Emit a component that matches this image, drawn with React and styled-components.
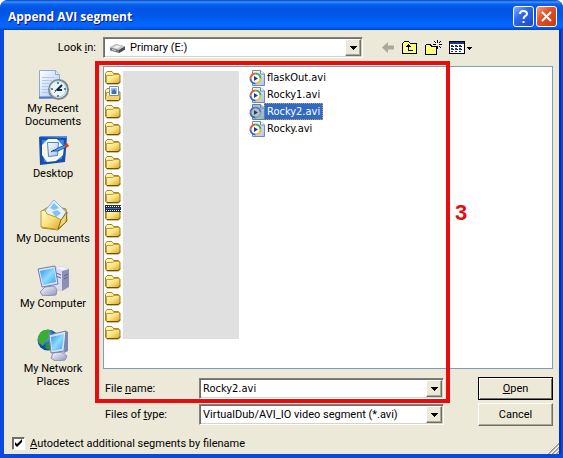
import { useState } from "react";
import styled, { createGlobalStyle, css } from "styled-components";

const GlobalStyle = createGlobalStyle`
  * {
    box-sizing: border-box;
  }
  body {
    margin: 0;
    background: #fff;
    color: #000;
    font-family: Roboto, Tahoma, sans-serif;
    font-size: 11px;
    line-height: 13px;
  }
  button, input, select {
    font: inherit;
    color: inherit;
  }
`;

const raised = css`
  border: 1px solid;
  border-color: #fff #716f64 #716f64 #fff;
  box-shadow: inset -1px -1px #aca899;
`;

const Dialog = styled.main`
  border-radius: 8px 8px 0 0;
  overflow: hidden;
  background: #0a48de;
`;

const TitleBar = styled.header`
  display: flex;
  align-items: center;
  gap: 2px;
  height: 30px;
  padding: 3px 6px 0 8px;
  background: linear-gradient(
    #0a3fc4 0,
    #3a93ff 2px,
    #0a62ee 4px,
    #0054e3 9px,
    #0058ea 16px,
    #0366ff 24px,
    #0364fb 27px,
    #0042c4 30px
  );
`;

const Title = styled.h1`
  flex: 1;
  margin: 0;
  color: #fff;
  font: bold 12px "Open Sans", "Noto Sans", sans-serif;
  text-shadow: 1px 1px #0f1089;
`;

const CaptionButton = styled.button`
  width: 21px;
  height: 21px;
  padding: 0;
  border: 1px solid #fff;
  border-radius: 3px;
  background: ${(p) =>
    p.$close
      ? "linear-gradient(135deg, #f0a084, #e0522c 40%, #c83a12)"
      : "linear-gradient(135deg, #88aef8, #2f67e8 40%, #1a48cc)"};

  svg {
    display: block;
  }
`;

const Body = styled.div`
  margin: 0 4px 4px;
  padding: 7px 6px 4px;
  background: #ece9d8;
  box-shadow: 2px 0 #0030c0;
  position: relative;
`;

const LookInRow = styled.div`
  display: flex;
  align-items: center;
`;

const LookInLabel = styled.label`
  width: 93px;
  padding-right: 7px;
  text-align: right;
`;

const Combo = styled.div`
  position: relative;
  flex: 1;
  display: flex;
  align-items: center;
  height: 21px;
  min-width: 0;
  padding: 1px 18px 1px 1px;
  background: #fff;
  border: 1px solid;
  border-color: #808080 #fff #fff #808080;
  box-shadow: inset 1px 1px #716f64, inset -1px -1px #d8d4c4;

  svg.drive {
    flex: none;
    margin: 0 2px 0 4px;
  }
  select, input {
    flex: 1;
    min-width: 0;
    height: 17px;
    padding: 0 2px;
    border: 0;
    background: none;
    outline: 0;
    appearance: none;
  }
  input {
    font-family: "DejaVu Sans Condensed", Verdana, sans-serif;
  }
`;

const Arrow = styled.span`
  ${raised}
  position: absolute;
  top: 1px;
  right: 1px;
  bottom: 1px;
  width: 16px;
  display: grid;
  place-items: center;
  background: #ece9d8;
  pointer-events: none;
`;

const Tools = styled.div`
  flex: none;
  display: flex;
  gap: 7px;
  width: 190px;
  padding-left: 18px;
`;

const ToolButton = styled.button`
  flex: none;
  padding: 0;
  border: 0;
  background: none;

  svg {
    display: block;
  }
`;

const Columns = styled.div`
  display: flex;
  margin-top: 8px;
`;

const Places = styled.nav`
  flex: none;
  display: flex;
  flex-direction: column;
  width: 86px;
  margin-right: 7px;
  padding-top: 3px;
`;

const Place = styled.button`
  display: flex;
  flex-direction: column;
  align-items: center;
  min-height: 65px;
  padding: 0;
  border: 0;
  background: none;

  svg {
    flex: none;
    margin-bottom: 1px;
  }
  span {
    max-width: 80px;
  }
`;

const Main = styled.div`
  position: relative;
  flex: 1;
  min-width: 0;
`;

const Files = styled.div`
  display: flex;
  padding: 2px 1px 27px;
  background: #fff;
  border: 1px solid #7f9db9;
`;

const FolderIcons = styled.ul`
  margin: 0 2px 0 0;
  padding: 0;
  list-style: none;

  li {
    height: 17px;
  }
  svg {
    display: block;
  }
`;

const HiddenNames = styled.div`
  width: 116px;
  margin: 2px 10px 2px 0;
  background: #e0e0e0;
`;

const FileList = styled.ul`
  margin: 0;
  padding: 0;
  list-style: none;
`;

const FileItem = styled.li`
  display: flex;
  align-items: center;
  height: 17px;

  span {
    padding: 1px 2px;
    border: 1px dotted transparent;
    margin-left: -1px;
    font-family: "DejaVu Sans Condensed", Verdana, sans-serif;
    line-height: 13px;
  }
  ${(p) =>
    p.$selected &&
    css`
      span {
        color: #fff;
        background: #316ac5;
        border-color: #d89a4a;
      }
      svg {
        filter: sepia(1) hue-rotate(180deg) saturate(3) brightness(0.75);
      }
    `}
`;

const Fields = styled.div`
  display: grid;
  grid-template-columns: 94px 1fr 75px;
  row-gap: 3px;
  align-items: center;
  margin-top: 8px;
  padding-left: 2px;

  ${Combo} {
    margin-right: 34px;
  }
`;

const PushButton = styled.button`
  ${raised}
  height: 23px;
  padding: 0;
  background: #ece9d8;
  ${(p) =>
    p.$default &&
    css`
      border-color: #000;
      box-shadow: inset 1px 1px #fff, inset -1px -1px #716f64;
    `}
`;

const Highlight = styled.div`
  position: absolute;
  top: -5px;
  right: 103px;
  bottom: 23px;
  left: -8px;
  border: 4px solid #e80c0c;
  pointer-events: none;
`;

const StepNumber = styled.strong`
  position: absolute;
  top: 50%;
  left: 100%;
  margin: -32px 0 0 9px;
  color: #e80c0c;
  font: bold 22px "Liberation Sans", Arial, sans-serif;
`;

const Autodetect = styled.label`
  display: flex;
  align-items: center;
  gap: 5px;
  margin-top: 11px;
  padding-left: 2px;
`;

const CheckBox = styled.input`
  appearance: none;
  width: 13px;
  height: 13px;
  margin: 0;
  border: 1px solid;
  border-color: #716f64 #fff #fff #716f64;
  background: #fff;
  box-shadow: inset 1px 1px #716f64;

  &:checked {
    background: #fff
      url("data:image/svg+xml,%3Csvg xmlns='http://www.w3.org/2000/svg' viewBox='0 0 11 11'%3E%3Cpath d='M2 4v3l2 2 5-5V1L4 6z'/%3E%3C/svg%3E");
  }
`;

const Grip = styled.svg`
  position: absolute;
  right: 0;
  bottom: 0;
`;

const Gradients = () => (
  <svg width="0" height="0" style={{ position: "absolute" }} aria-hidden="true">
    <defs>
      <linearGradient id="gold" x2="1" y2="1">
        <stop stopColor="#fffbd0" />
        <stop offset=".5" stopColor="#fae27c" />
        <stop offset="1" stopColor="#d9a62c" />
      </linearGradient>
      <linearGradient id="screen" x2="1" y2="1">
        <stop stopColor="#2c8cf0" />
        <stop offset=".5" stopColor="#8fdcff" />
        <stop offset="1" stopColor="#3a9cf4" />
      </linearGradient>
      <linearGradient id="metal" x2="1" y2="1">
        <stop stopColor="#fff" />
        <stop offset="1" stopColor="#8c92b8" />
      </linearGradient>
      <linearGradient id="paper" x2="1" y2="1">
        <stop stopColor="#fff" />
        <stop offset="1" stopColor="#a8c4f0" />
      </linearGradient>
      <radialGradient id="globe" cx=".35" cy=".3">
        <stop stopColor="#8cd4ff" />
        <stop offset="1" stopColor="#0848b0" />
      </radialGradient>
    </defs>
  </svg>
);

const DownArrow = () => (
  <svg width="7" height="4" shapeRendering="crispEdges">
    <path d="M0 0h7v1H6v1H5v1H4v1H3V3H2V2H1V1H0z" />
  </svg>
);

const FolderIcon = ({ kind }) => (
  <svg width="16" height="16">
    <path
      d="M.5 4.500 2 2.500h5l1.500 2h5l1.500 1.500v7.500l-1.500 1.500H2L.5 13.500z"
      fill="url(#gold)"
      stroke="#a88420"
    />
    <path d="M1.500 6.500h6l1.500-1h5.500v7.500l-1.500 1.500H1.500z" fill="url(#gold)" stroke="#c49c34" />
    <path d="M2 14.500h11.500l1.500-2" fill="none" stroke="#6c5210" />
    {kind === "pictures" && (
      <>
        <path d="M4.500.5h9v9h-9z" fill="#fff" stroke="#6c8cc4" />
        <path d="M6 2h6v6H6z" fill="#8cc0f4" />
        <path d="M7 8V5l2-2 2 2v3z" fill="#4a6cb0" />
        <path d="M1 10h13v4H1z" fill="#f4d468" />
      </>
    )}
    {kind === "video" && (
      <>
        <path d="M0 0h16v7H0z" fill="#1c2c58" />
        <path d="M1 1.500h15M1 5.500h15" stroke="#fff" strokeDasharray="1 1" />
        <path d="M1 3h14v1H1z" fill="#4468b8" />
      </>
    )}
  </svg>
);

const AviIcon = () => (
  <svg width="16" height="16">
    <path d="M3.500.5h8l4 3.500v11.500h-12z" fill="url(#paper)" stroke="#7488b8" />
    <path d="M11.500.5v3.500h4" fill="#fff" stroke="#7488b8" />
    <circle cx="6.500" cy="8.500" r="5" fill="#fff" />
    <g fill="none" strokeWidth="2">
      <path d="M1.500 8.500a5 5 0 0 1 5-5" stroke="#e45c28" />
      <path d="M6.500 3.500a5 5 0 0 1 5 5" stroke="#48a850" />
      <path d="M11.500 8.500a5 5 0 0 1-5 5" stroke="#f0b828" />
      <path d="M6.500 13.500a5 5 0 0 1-5-5" stroke="#3868d0" />
    </g>
    <path d="M5 6v5l4-2.500z" fill="#183c98" />
  </svg>
);

const DriveIcon = () => (
  <svg className="drive" width="17" height="14">
    <path d="M1 6.500 7 3l9 2.500v3L10 12 1 9.500z" fill="#77777c" />
    <path d="M1 6.500 7 3l9 2.500L10 9z" fill="#c8c8cc" />
    <path d="M4 6.500 8 4.500l4 1-4 2z" fill="#eee" />
    <path d="m10 9 6-3.500v3L10 12z" fill="#4c4c50" />
    <path d="M3 8.500 7 9.500" stroke="#ddd" />
  </svg>
);

const RecentIcon = () => (
  <svg width="32" height="32">
    <path d="M2.500 1.500h16l4 4v23l-20 1z" fill="url(#paper)" stroke="#8ca8dc" />
    <path d="M2 28.500h20" stroke="#4c78cc" strokeWidth="2" />
    <path d="M18.500 1.500v4h4" fill="#dce8fc" stroke="#8ca8dc" />
    <path d="M5 8.500h12M5 11.500h10M5 14.500h7M5 17.500h6M5 20.500h6M5 23.500h7" stroke="#b4c8ec" />
    <circle cx="21.500" cy="20.500" r="9.500" fill="#e8f4f8" stroke="#7e8694" strokeWidth="2" />
    <circle cx="21" cy="20" r="8" fill="none" stroke="#c0ccd4" />
    <path d="M21 13v2M21 26v2M14 20h2M27 20h2" stroke="#3898a8" strokeWidth="2" />
    <path d="m25 16-5 5h5" fill="none" stroke="#182840" strokeWidth="2" />
    <path d="m20 21-3 3" stroke="#e06040" />
  </svg>
);

const DesktopIcon = () => (
  <svg width="32" height="32">
    <path d="M2 3h28l-2 25-25 3z" fill="#164fae" />
    <path d="m2 3 2-1h26v2z" fill="#4c94ec" />
    <path d="M5 6h22l-2 19-18 3z" fill="#3c8ce8" />
    <path d="M11 5h9l7 8-1 8-7 6-9 1-5-7V11z" fill="#fbf8e4" />
    <path d="M10.500 8.500h11l-1 13-9 1z" fill="url(#paper)" stroke="#4888d8" />
    <path d="m16 17 5-3 7-3 1 2-8 4z" fill="#4ca4ec" stroke="#205ca8" />
    <path d="m27 10 3-1 2 3-3 2z" fill="#d03c24" />
    <path d="m14 18 3-2" stroke="#222" />
  </svg>
);

const DocumentsIcon = () => (
  <svg width="32" height="32">
    <path d="m5 12 9-6 15 4 1 12-9 9-16-2z" fill="#e8bc48" stroke="#a88428" />
    <path d="m7 13 10-12 12 12-8 14z" fill="#e4f2ff" stroke="#88b4e4" />
    <path d="m13 9 4-5 5 5-5 2zM15 13l5-2 4 3-5 4z" fill="#84c0f4" />
    <path d="m4 12 4-1 2 4 9 3 5 3-3 9.500L4 28z" fill="url(#gold)" stroke="#c09830" />
    <path d="m21 30 3-9 6-8-1 10z" fill="#f4d874" stroke="#8c6c1c" />
  </svg>
);

const ComputerIcon = () => (
  <svg width="32" height="32">
    <path d="m18 4 7-2 7 3v18l-7 4-7-3z" fill="#8c90b8" />
    <path d="m18 4 7 3v20l-7-3z" fill="#dcdcf0" />
    <path d="m18 4 7-2 7 3-7 2z" fill="#f0f0fc" />
    <path d="m19 9 5 2M19 12l5 2M27 12l4-2M27 15l4-2" stroke="#646890" />
    <path d="m8 23 9-1 3 4-1 5-13 1-3-4z" fill="url(#metal)" stroke="#8c90b4" />
    <path d="M1 5 18 2l3 18-16 3z" fill="#dce4f4" stroke="#6c80b4" />
    <path d="M3 7 17 4l2 14-13 3z" fill="url(#screen)" />
  </svg>
);

const NetworkIcon = () => (
  <svg width="32" height="32">
    <circle cx="11" cy="11" r="10.500" fill="url(#globe)" />
    <path d="M3 4c3-4 9-4 11-2l-3 3 2 3-4 3-3 6-4-3-1-5z" fill="#3cac34" />
    <path d="m9 15 5-1 2 3-4 4-4-2z" fill="#2c9428" />
    <path d="m16 24 9-1 5 4-2 4-10 1-4-3z" fill="url(#metal)" stroke="#8c90b4" />
    <path d="m29 2 2 1v19l-4 2z" fill="#7c84b0" />
    <path d="m12 6 17-4-2 20-13 2z" fill="#dce4f4" stroke="#6c80b4" />
    <path d="m14 8 13-3-2 15-10 2z" fill="url(#screen)" />
  </svg>
);

const BackIcon = () => (
  <svg width="14" height="17">
    <path d="M1 8.500 7 3v3.500h6v4H7V14z" fill="#aca899" />
  </svg>
);

const UpIcon = () => (
  <svg width="16" height="17" shapeRendering="crispEdges">
    <path d="M.5 14.500v-10l2-2h4l2 2h6v10z" fill="#ffff7c" stroke="#000" />
    <path d="M4 8h5V7H8V6H7V5H6v1H5v1H4zM6 8h1v3h4v1H6z" />
  </svg>
);

const NewFolderIcon = () => (
  <svg width="17" height="17" shapeRendering="crispEdges">
    <path d="M.5 15.500v-9l1-1h4l1 2h5v8z" fill="#ffff7c" stroke="#000" />
    <path d="M12.500 1v3M12.500 7v3M8 5.500h3M14 5.500h3M9 2l2 2M16 2l-2 2M14 7l2 2" stroke="#000" />
  </svg>
);

const ViewsIcon = () => (
  <svg width="24" height="17" shapeRendering="crispEdges">
    <path d="M.5 2.500h15v12H.5z" fill="#fff" stroke="#000" />
    <path d="M1 3h14v2H1z" fill="#1c3494" />
    <path
      d="M2 6h2v2H2zM6 6h2v2H6zM10 6h2v2h-2zM2 9h2v2H2zM6 9h2v2H6zM10 9h2v2h-2zM2 12h2v1H2zM6 12h2v1H6zM10 12h2v1h-2z"
      fill="#1c3494"
    />
    <path d="M4 7h1v1H4zM8 7h1v1H8zM12 7h1v1h-1zM4 10h1v1H4zM8 10h1v1H8zM12 10h1v1h-1z" />
    <path d="M18 8h5v1h-1v1h-1v1h-1v-1h-1V9h-1z" />
  </svg>
);

const places = [
  { name: "My Recent Documents", Icon: RecentIcon },
  { name: "Desktop", Icon: DesktopIcon },
  { name: "My Documents", Icon: DocumentsIcon },
  { name: "My Computer", Icon: ComputerIcon },
  { name: "My Network Places", Icon: NetworkIcon },
];

const folders = Array.from({ length: 16 }, (_, i) =>
  i === 1 ? "pictures" : i === 8 ? "video" : "plain"
);

const files = ["flaskOut.avi", "Rocky1.avi", "Rocky2.avi", "Rocky.avi"];

const App = () => {
  const [fileName, setFileName] = useState("Rocky2.avi");

  return (
    <Dialog>
      <GlobalStyle />
      <Gradients />
      <TitleBar>
        <Title>Append AVI segment</Title>
        <CaptionButton aria-label="Help">
          <svg width="19" height="19" fill="none" stroke="#fff" strokeWidth="2">
            <path d="M6 7c0-4 7-4 7 0 0 2-3.500 2-3.500 5M9.500 14v2" />
          </svg>
        </CaptionButton>
        <CaptionButton $close aria-label="Close">
          <svg width="19" height="19" stroke="#fff" strokeWidth="2">
            <path d="m5 5 9 9M14 5l-9 9" />
          </svg>
        </CaptionButton>
      </TitleBar>
      <Body>
        <LookInRow>
          <LookInLabel htmlFor="look-in">
            Look <u>i</u>n:
          </LookInLabel>
          <Combo>
            <DriveIcon />
            <select id="look-in">
              <option>Primary (E:)</option>
            </select>
            <Arrow>
              <DownArrow />
            </Arrow>
          </Combo>
          <Tools>
            <ToolButton aria-label="Back" disabled>
              <BackIcon />
            </ToolButton>
            <ToolButton aria-label="Up one level">
              <UpIcon />
            </ToolButton>
            <ToolButton aria-label="New folder">
              <NewFolderIcon />
            </ToolButton>
            <ToolButton aria-label="Views">
              <ViewsIcon />
            </ToolButton>
          </Tools>
        </LookInRow>
        <Columns>
          <Places>
            {places.map(({ name, Icon }) => (
              <Place key={name}>
                <Icon />
                <span>{name}</span>
              </Place>
            ))}
          </Places>
          <Main>
            <Files>
              <FolderIcons>
                {folders.map((kind, i) => (
                  <li key={i}>
                    <FolderIcon kind={kind} />
                  </li>
                ))}
              </FolderIcons>
              <HiddenNames />
              <FileList role="listbox" aria-label="Files">
                {files.map((file) => (
                  <FileItem
                    key={file}
                    role="option"
                    aria-selected={file === fileName}
                    $selected={file === fileName}
                    onClick={() => setFileName(file)}
                  >
                    <AviIcon />
                    <span>{file}</span>
                  </FileItem>
                ))}
              </FileList>
            </Files>
            <Fields>
              <label htmlFor="file-name">
                File <u>n</u>ame:
              </label>
              <Combo>
                <input
                  id="file-name"
                  value={fileName}
                  onChange={(e) => setFileName(e.target.value)}
                />
                <Arrow>
                  <DownArrow />
                </Arrow>
              </Combo>
              <PushButton $default>
                <u>O</u>pen
              </PushButton>
              <label htmlFor="file-type">
                Files of <u>t</u>ype:
              </label>
              <Combo>
                <select id="file-type">
                  <option>VirtualDub/AVI_IO video segment (*.avi)</option>
                </select>
                <Arrow>
                  <DownArrow />
                </Arrow>
              </Combo>
              <PushButton>Cancel</PushButton>
            </Fields>
            <Highlight>
              <StepNumber>3</StepNumber>
            </Highlight>
          </Main>
        </Columns>
        <Autodetect>
          <CheckBox type="checkbox" defaultChecked />
          <span>
            <u>A</u>utodetect additional segments by filename
          </span>
        </Autodetect>
        <Grip width="12" height="12">
          <path d="M1 12 12 1M5 12l7-7M9 12l3-3" stroke="#a09c8c" strokeWidth="2" />
          <path d="M0 12 12 0M4 12l8-8M8 12l4-4" stroke="#fff" />
        </Grip>
      </Body>
    </Dialog>
  );
};

export default App;
